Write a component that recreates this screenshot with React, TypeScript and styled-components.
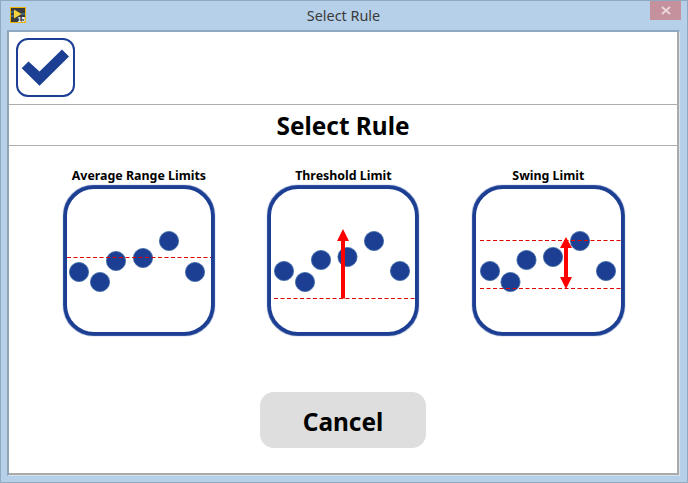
import * as React from 'react';
import styled, { createGlobalStyle } from 'styled-components';

const BLUE = '#1c3f94';
const RED = '#ff0000';

const GlobalStyle = createGlobalStyle`
  html, body {
    margin: 0;
    padding: 0;
    background: #b5d0e8;
  }
`

const WindowFrame = styled.div`
  box-sizing: border-box;
  width: 688px;
  height: 483px;
  display: flex;
  flex-direction: column;
  background: #b5d0e8;
  border: 1px solid #8fa9c0;
  font-family: "Noto Sans", "Liberation Sans", sans-serif;
`

const TitleBar = styled.div`
  flex: none;
  height: 29px;
  display: flex;
  align-items: flex-start;
  justify-content: space-between;
`

const AppIcon = styled.svg`
  width: 16px;
  height: 16px;
  margin: 6px 0 0 9px;
`

const TitleText = styled.div`
  font-size: 14.4px;
  line-height: 18px;
  margin-top: 6px;
  padding-left: 11px;
  color: #3a3a3a;
`

const CloseButton = styled.div`
  width: 31px;
  height: 19px;
  margin-right: 6px;
  display: flex;
  align-items: center;
  justify-content: center;
  background: #c4919d;
`

const Client = styled.div`
  flex: 1;
  margin: 0 7px 6px 6px;
  display: flex;
  flex-direction: column;
  background: #fff;
  border-style: solid;
  border-width: 2px 1px 1px 2px;
  border-color: #8fa9c0 #d5e3ef #d5e3ef #8fa3b5;
  box-shadow: inset -2px -2px 0 #aaaaaa;
  padding-bottom: 2px;
`

const Toolbar = styled.div`
  flex: none;
  box-sizing: border-box;
  height: 73px;
  padding: 6px 0 0 7px;
  border-bottom: 1px solid #adadad;
`

const ConfirmButton = styled.div`
  box-sizing: border-box;
  width: 59px;
  height: 59px;
  border: 2px solid ${BLUE};
  border-radius: 12px;
`

const Heading = styled.h1`
  flex: none;
  box-sizing: border-box;
  height: 41px;
  margin: 0;
  padding-right: 2px;
  font-size: 24.4px;
  line-height: 42px;
  font-weight: 700;
  text-align: center;
  color: #000;
  border-bottom: 1px solid #adadad;
`

const RuleRow = styled.div`
  flex: none;
  display: flex;
  gap: 54.5px;
  padding: 22px 0 0 54.9px;
`

const RuleColumn = styled.div<{ $width: number }>`
  width: ${(p) => p.$width}px;
  display: flex;
  flex-direction: column;
  align-items: center;
`

const RuleLabel = styled.div`
  font-size: 12.4px;
  line-height: 16px;
  height: 18px;
  font-weight: 700;
  color: #000;
  white-space: nowrap;
`

const RuleCard = styled.div`
  box-sizing: border-box;
  width: 100%;
  height: 149px;
  border: 3px solid ${BLUE};
  border-radius: 30px;
  background: #fff;
  box-shadow: 0 0 1px 0.5px ${BLUE};
`

const Plot = styled.svg`
  display: block;
  width: 143px;
  height: 143px;
  overflow: visible;
`

const Footer = styled.div`
  flex: 1;
  display: flex;
  justify-content: center;
  padding: 57px 2px 0 0;
`

const CancelButton = styled.div`
  width: 166px;
  height: 56px;
  border-radius: 14px;
  background: #dedede;
  color: #000;
  font-size: 24.4px;
  font-weight: 700;
  line-height: 59px;
  text-align: center;
`

type Dot = [number, number];

const Dots = ({ points }: { points: Dot[] }) => (
  <g fill={BLUE} stroke="#3f6aa5" strokeWidth="0.8">
    {points.map(([x, y]) => (
      <circle key={x} cx={x} cy={y} r="9.6" />
    ))}
  </g>
)

const Limit = ({ y, x1, x2 = 147 }: { y: number; x1: number; x2?: number }) => (
  <line x1={x1} x2={x2} y1={y} y2={y} stroke="#e00000" strokeWidth="1" strokeDasharray="4 2.5" />
)

const AverageDiagram = () => (
  <Plot viewBox="3 3 143 143">
    <Dots points={[[15, 86], [36, 96], [52, 75], [79, 72], [105, 55], [131, 86]]} />
    <Limit y={71.5} x1={3} />
  </Plot>
)

const ThresholdDiagram = () => (
  <Plot viewBox="3 3 143 143">
    <Dots points={[[16, 85], [37, 96], [53, 74], [79.5, 71], [106, 55], [132, 85]]} />
    <Limit y={112.5} x1={6} />
    <path d="M73 112.5V55H69L75 43L81 55H77V112.5Z" fill={RED} />
  </Plot>
)

const SwingDiagram = () => (
  <Plot viewBox="3 3 143 143">
    <Dots points={[[17, 85], [37.5, 96], [53.5, 74], [80, 71], [107, 55], [133, 85]]} />
    <Limit y={54.5} x1={7} x2={148} />
    <Limit y={102.5} x1={7} x2={148} />
    <path d="M93 51L99 62H95V91H99L93 103L87 91H91V62H87Z" fill={RED} />
  </Plot>
)

const rules = [
  { label: 'Average Range Limits', width: 150, Diagram: AverageDiagram },
  { label: 'Threshold Limit', width: 150, Diagram: ThresholdDiagram },
  { label: 'Swing Limit', width: 151, Diagram: SwingDiagram },
]

export default function App() {
  return (
    <WindowFrame>
      <GlobalStyle />
      <TitleBar>
        <AppIcon viewBox="0 0 16 16">
          <rect x="0.5" y="0.5" width="15" height="15" fill="#3b3b3b" stroke="#f0b400" />
          <path d="M1 5H5M1 9H5M11 7H15" stroke="#3f8fd0" strokeWidth="1.2" />
          <path d="M4 2.5L11.5 7L4 11.5Z" fill="#f5d33c" />
          <text x="7.5" y="15" fontSize="7" fontWeight="700" fill="#fff" fontFamily="Liberation Sans">15</text>
        </AppIcon>
        <TitleText>Select Rule</TitleText>
        <CloseButton>
          <svg width="10" height="9" viewBox="0 0 10 9">
            <path d="M1 1L9 8M9 1L1 8" stroke="#ecd9dd" strokeWidth="1.8" />
          </svg>
        </CloseButton>
      </TitleBar>
      <Client>
        <Toolbar>
          <ConfirmButton>
            <svg width="55" height="55" viewBox="0.5 0.5 55 55">
              <path d="M4.2 28.8L11 22L22 32L44.5 10L51.5 17L22 46.2Z" fill={BLUE} />
            </svg>
          </ConfirmButton>
        </Toolbar>
        <Heading>Select Rule</Heading>
        <RuleRow>
          {rules.map(({ label, width, Diagram }) => (
            <RuleColumn key={label} $width={width}>
              <RuleLabel>{label}</RuleLabel>
              <RuleCard>
                <Diagram />
              </RuleCard>
            </RuleColumn>
          ))}
        </RuleRow>
        <Footer>
          <CancelButton>Cancel</CancelButton>
        </Footer>
      </Client>
    </WindowFrame>
  )
}
